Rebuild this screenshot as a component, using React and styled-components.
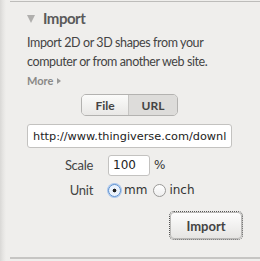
import React, { useState } from "react";
import styled, { createGlobalStyle } from "styled-components";

const GlobalStyle = createGlobalStyle`
  html, body {
    margin: 0;
    padding: 0;
    background: #efeeec;
  }
  body {
    font-family: Lato, "Open Sans", "Liberation Sans", sans-serif;
    color: #444;
  }
`;

const Panel = styled.div`
  width: 260px;
  height: 261px;
  box-sizing: border-box;
  display: flex;
  background: #efeeec;
`;

const Shadow = styled.div`
  width: 10px;
  flex: none;
  background: linear-gradient(to right, #d9d8d6 0, #e6e5e3 3px, #efeeec 6px);
`;

const Section = styled.div`
  flex: 1;
  margin-top: 1px;
  border-top: 1px solid #bdbcba;
  border-bottom: 2px solid #c6c5c3;
  height: 258px;
  box-sizing: border-box;
  padding: 6px 0 0 17px;
  display: flex;
  flex-direction: column;
`;

const Header = styled.div`
  display: flex;
  align-items: center;
  gap: 8px;
  height: 20px;
`;

const Triangle = styled.span`
  width: 0;
  height: 0;
  margin-top: 1px;
  border-left: 4.5px solid transparent;
  border-right: 4.5px solid transparent;
  border-top: 8px solid #b0afad;
`;

const Title = styled.h2`
  margin: 0;
  font-size: 15px;
  font-weight: 700;
  letter-spacing: -0.5px;
  color: #5a5a5a;
`;

const Description = styled.p`
  margin: 5px 0 0;
  font-size: 12.5px;
  line-height: 19px;
  letter-spacing: -0.4px;
  color: #444;
`;

const More = styled.a`
  display: flex;
  align-items: center;
  gap: 4px;
  margin-top: 3px;
  font-size: 11px;
  font-weight: 700;
  color: #8a8987;
  text-decoration: none;
`;

const Caret = styled.span`
  width: 0;
  height: 0;
  border-top: 3px solid transparent;
  border-bottom: 3px solid transparent;
  border-left: 4px solid #9a9997;
`;

const Center = styled.div`
  display: flex;
  justify-content: center;
  width: 205px;
  margin-top: 7px;
`;

const Segmented = styled.div`
  display: flex;
  border: 1px solid #b3b2b0;
  border-radius: 5px;
  overflow: hidden;
  height: 20px;
`;

const Segment = styled.button`
  width: ${(p) => p.$w}px;
  border: none;
  margin: 0;
  padding: 0;
  font-family: inherit;
  font-size: 12px;
  font-weight: 700;
  color: #444;
  background: ${(p) =>
    p.$active ? "#dddcda" : "linear-gradient(#fbfbfa, #e9e8e6)"};
  border-right: ${(p) => (p.$first ? "1px solid #c6c5c3" : "none")};
`;

const UrlInput = styled.input`
  width: 205px;
  height: 24px;
  box-sizing: border-box;
  margin-top: 8px;
  border: 1px solid #c3c2c0;
  border-radius: 3px;
  background: #fff;
  padding: 0 5px;
  font-family: "DejaVu Sans", "Liberation Sans", sans-serif;
  font-size: 11.3px;
  color: #222;
  outline: none;
`;

const Row = styled.div`
  display: flex;
  align-items: center;
  margin-top: ${(p) => p.$mt}px;
  height: 22px;
`;

const Label = styled.span`
  flex: none;
  width: 81px;
  text-align: right;
  padding-right: 15px;
  box-sizing: border-box;
  font-size: 13px;
  letter-spacing: -0.3px;
  color: #444;
`;

const SmallInput = styled.input`
  width: 42px;
  height: 21px;
  box-sizing: border-box;
  border: 1px solid #c3c2c0;
  border-radius: 3px;
  background: #fff;
  padding: 0 4px;
  font-family: "DejaVu Sans", "Liberation Sans", sans-serif;
  font-size: 12px;
  color: #222;
  outline: none;
`;

const Unit = styled.span`
  margin-left: 4px;
  font-family: "DejaVu Sans", sans-serif;
  font-size: 12px;
  color: #333;
`;

const RadioLabel = styled.label`
  display: flex;
  align-items: center;
  gap: 3px;
  margin-right: 6px;
  font-family: "DejaVu Sans", sans-serif;
  font-size: 12px;
  color: #333;
`;

const RadioCircle = styled.span`
  width: 13px;
  height: 13px;
  box-sizing: border-box;
  border-radius: 50%;
  border: 1px solid ${(p) => (p.$on ? "#5a8fd0" : "#9a9997")};
  background: ${(p) =>
    p.$on
      ? "radial-gradient(circle, #222 0 1.6px, #eaf2fc 2.2px)"
      : "linear-gradient(#fff, #eee)"};
  box-shadow: ${(p) => (p.$on ? "0 0 0 1px #a8c6ee" : "none")};
`;

const ButtonRow = styled.div`
  display: flex;
  justify-content: flex-end;
  width: 215px;
  margin-top: 11px;
`;

const ImportButton = styled.button`
  width: 72px;
  height: 27px;
  box-sizing: border-box;
  border: 1px solid #b9b8b6;
  border-radius: 4px;
  background: linear-gradient(#fdfdfd, #e6e5e3);
  font-family: inherit;
  font-size: 13px;
  font-weight: 700;
  color: #444;
  outline: 1px dotted #555;
  outline-offset: 0;
`;

export default function App() {
  const [mode, setMode] = useState("url");
  const [unit, setUnit] = useState("mm");

  return (
    <>
      <GlobalStyle />
      <Panel>
        <Shadow />
        <Section>
          <Header>
            <Triangle />
            <Title>Import</Title>
          </Header>
          <Description>
            Import 2D or 3D shapes from your
            <br />
            computer or from another web site.
          </Description>
          <More href="#">
            More <Caret />
          </More>
          <Center>
            <Segmented>
              <Segment
                $w={47}
                $first
                $active={mode === "file"}
                onClick={() => setMode("file")}
              >
                File
              </Segment>
              <Segment
                $w={48}
                $active={mode === "url"}
                onClick={() => setMode("url")}
              >
                URL
              </Segment>
            </Segmented>
          </Center>
          <UrlInput defaultValue="http://www.thingiverse.com/download:12345" />
          <Row $mt={6}>
            <Label>Scale</Label>
            <SmallInput defaultValue="100" />
            <Unit>%</Unit>
          </Row>
          <Row $mt={3}>
            <Label>Unit</Label>
            <RadioLabel onClick={() => setUnit("mm")}>
              <RadioCircle $on={unit === "mm"} />
              mm
            </RadioLabel>
            <RadioLabel onClick={() => setUnit("inch")}>
              <RadioCircle $on={unit === "inch"} />
              inch
            </RadioLabel>
          </Row>
          <ButtonRow>
            <ImportButton>Import</ImportButton>
          </ButtonRow>
        </Section>
      </Panel>
    </>
  );
}
